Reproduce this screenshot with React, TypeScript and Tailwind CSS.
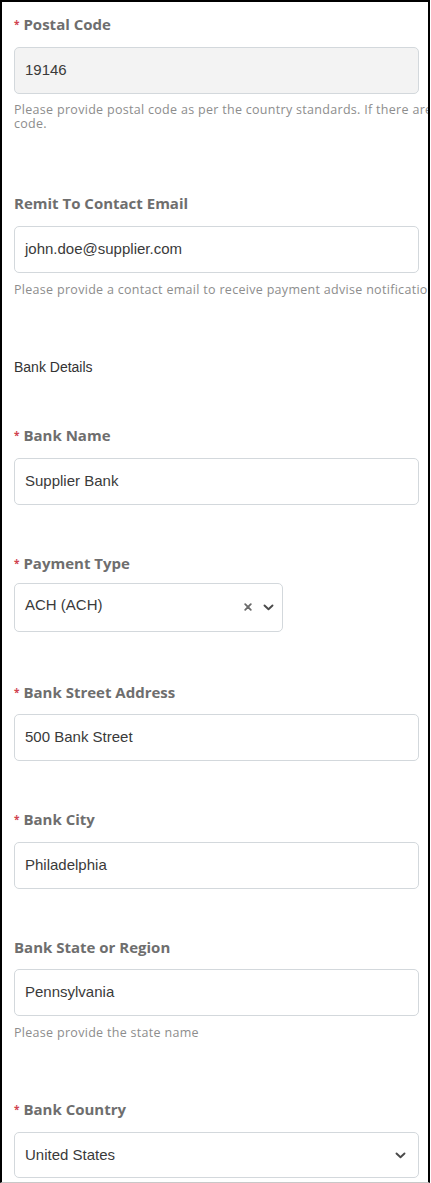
import React from "react";

const labelCls =
  "flex items-start h-[20px] leading-[20px] text-[15px] font-bold text-[#6e6e6e] [font-family:'Open_Sans',sans-serif]";
const inputCls =
  "flex items-center w-[405px] px-[10px] rounded-[5px] border border-[#d3d8dc] text-[15px] text-[#3a3a3a] [font-family:'Liberation_Sans',Arial,sans-serif]";
const helpCls =
  "text-[12.5px] leading-[14px] tracking-[0.3px] text-[#8d8d8d] whitespace-nowrap [font-family:'Open_Sans',sans-serif]";

const Label = ({ text, req, className }: { text: string; req?: boolean; className: string }) => (
  <div className={`${labelCls} ${className}`}>
    {req && <span className="mt-[5px] text-[10px] leading-[10px] text-[#d0424f] mr-[4px]">*</span>}
    <span>{text}</span>
  </div>
);

const Chevron = () => (
  <svg width="11" height="7" viewBox="0 0 11 7" fill="none">
    <path d="M1.5 1.5 L5.5 5.3 L9.5 1.5" stroke="#4a4a4a" strokeWidth="1.9" strokeLinecap="round" strokeLinejoin="round" />
  </svg>
);

const Cross = () => (
  <svg width="8" height="8" viewBox="0 0 8 8" fill="none">
    <path d="M1.2 1.2 L6.8 6.8 M6.8 1.2 L1.2 6.8" stroke="#6b6b6b" strokeWidth="1.8" strokeLinecap="round" />
  </svg>
);

export default function App() {
  return (
    <div className="w-[431px] h-[1183px] bg-white">
      <div className="w-[430px] h-[1183px] overflow-hidden border-l-2 border-t-2 border-r-2 border-black border-b border-b-[#c8c8c8] pl-[12px] pt-[12px]">
        {/* postal code */}
        <Label text="Postal Code" req className="" />
        <div className={`${inputCls} mt-[13px] h-[47px] bg-[#f3f3f3]`}>19146</div>
        <div className={`${helpCls} mt-[9px]`}>
          <div>Please provide postal code as per the country standards. If there are no postal codes, please provide a default</div>
          <div>code.</div>
        </div>

        {/* remit email */}
        <Label text="Remit To Contact Email" className="mt-[62px]" />
        <div className={`${inputCls} mt-[13px] h-[47px]`}>john.doe@supplier.com</div>
        <div className={`${helpCls} mt-[10px]`}>
          Please provide a contact email to receive payment advise notifications.
        </div>

        <div className="mt-[61px] h-[18px] leading-[18px] text-[14px] text-[#333] [font-family:'Liberation_Sans',Arial,sans-serif]">
          Bank Details
        </div>

        <Label text="Bank Name" req className="mt-[49px]" />
        <div className={`${inputCls} mt-[13px] h-[47px]`}>Supplier Bank</div>

        <Label text="Payment Type" req className="mt-[48px]" />
        <div className={`${inputCls} mt-[10px] h-[49px] !w-[269px] !items-start pt-[10px] justify-between`}>
          <span>ACH (ACH)</span>
          <span className="flex items-center gap-[11px] mt-[9px] mr-[-2px]">
            <Cross />
            <Chevron />
          </span>
        </div>

        <Label text="Bank Street Address" req className="mt-[50px]" />
        <div className={`${inputCls} mt-[12px] h-[47px]`}>500 Bank Street</div>

        <Label text="Bank City" req className="mt-[48px]" />
        <div className={`${inputCls} mt-[13px] h-[47px]`}>Philadelphia</div>

        <Label text="Bank State or Region" className="mt-[48px]" />
        <div className={`${inputCls} mt-[12px] h-[47px]`}>Pennsylvania</div>
        <div className={`${helpCls} mt-[10px]`}>Please provide the state name</div>

        <Label text="Bank Country" req className="mt-[59px]" />
        <div className={`${inputCls} mt-[13px] h-[46px] justify-between`}>
          <span>United States</span>
          <span className="mr-[2px]">
            <Chevron />
          </span>
        </div>
      </div>
    </div>
  );
}
